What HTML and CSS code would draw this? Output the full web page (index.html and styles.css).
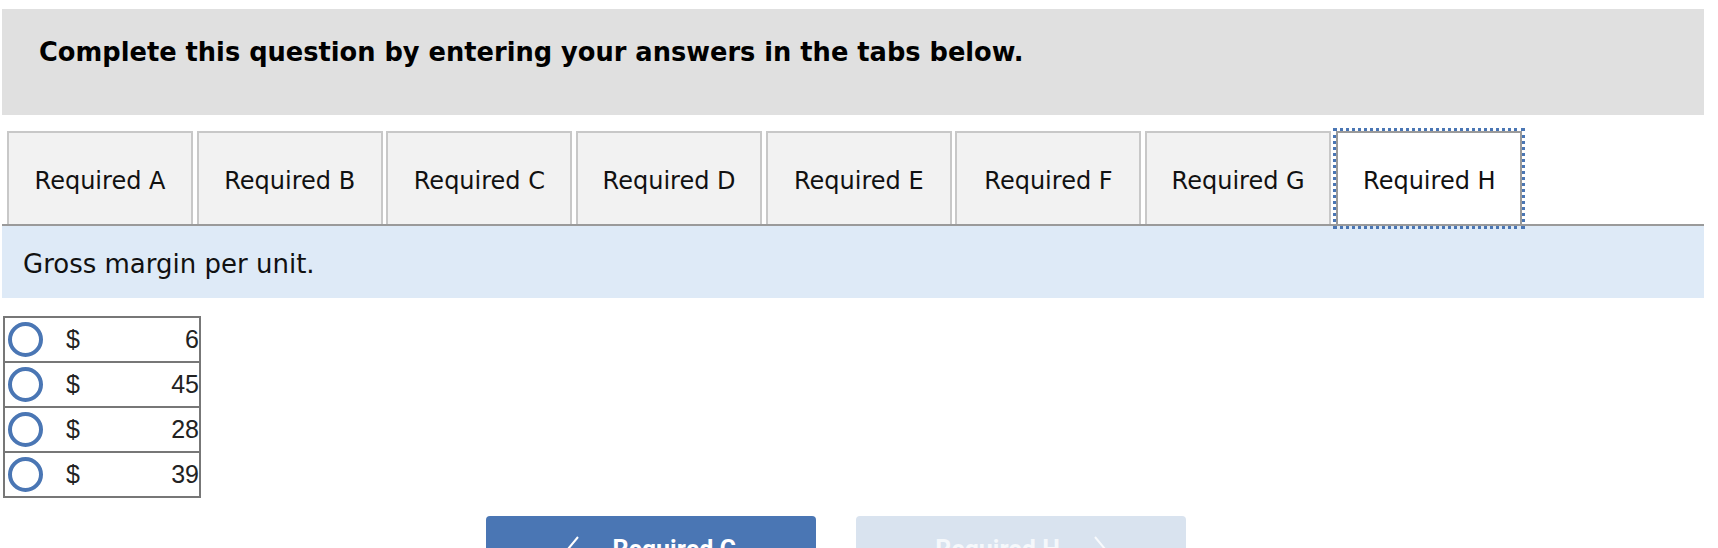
FILE: index.html
```html
<!DOCTYPE html>
<html>
<head>
<meta charset="utf-8">
<link rel="stylesheet" href="styles.css">
</head>
<body>
<div class="wrap">
  <div class="header">
    <h1 class="title">Complete this question by entering your answers in the tabs below.</h1>
  </div>
  <div class="tabs">
    <div class="tab">Required A</div>
    <div class="tab">Required B</div>
    <div class="tab">Required C</div>
    <div class="tab">Required D</div>
    <div class="tab">Required E</div>
    <div class="tab">Required F</div>
    <div class="tab">Required G</div>
    <div class="tab tab-active">Required H</div>
  </div>
  <div class="prompt">Gross margin per unit.</div>
  <div class="choices">
    <div class="choice"><span class="radio"></span><span class="dollar">$</span><span class="num">6</span></div>
    <div class="choice"><span class="radio"></span><span class="dollar">$</span><span class="num">45</span></div>
    <div class="choice"><span class="radio"></span><span class="dollar">$</span><span class="num">28</span></div>
    <div class="choice"><span class="radio"></span><span class="dollar">$</span><span class="num">39</span></div>
  </div>
  <div class="nav">
    <div class="btn btn-prev">
      <svg class="chev" width="14" height="26" viewBox="0 0 14 26"><polyline points="12,1 2,13 12,25" fill="none" stroke="#ffffff" stroke-width="2"/></svg>
      <span>Required G</span>
    </div>
    <div class="btn btn-next">
      <span>Required H</span>
      <svg class="chev" width="14" height="26" viewBox="0 0 14 26"><polyline points="2,1 12,13 2,25" fill="none" stroke="#ffffff" stroke-width="2"/></svg>
    </div>
  </div>
</div>
</body>
</html>
```
FILE: styles.css
```css
html, body {
  margin: 0;
  padding: 0;
  background: #ffffff;
}
body {
  font-family: "DejaVu Sans", Verdana, sans-serif;
  color: #111;
  overflow: hidden;
}
.wrap {
  padding: 9px 14px 0 2px;
  width: 1702px;
}
.header {
  background: #e0e0e0;
  height: 106px;
  box-sizing: border-box;
  padding: 28px 0 0 37px;
}
.title {
  margin: 0;
  font-size: 25.7px;
  line-height: 30px;
  font-weight: bold;
  color: #000;
}
.tabs {
  display: flex;
  gap: 3.7px;
  margin-top: 16px;
  padding-left: 5px;
  border-bottom: 2px solid #9a9a9a;
  height: 95px;
  box-sizing: border-box;
  align-items: flex-end;
}
.tab {
  width: 186px;
  height: 93px;
  box-sizing: border-box;
  background: #f2f2f2;
  border: 2px solid #c8c8c8;
  border-bottom: none;
  display: flex;
  align-items: center;
  justify-content: center;
  padding-top: 5px;
  font-size: 24px;
  line-height: 28px;
  color: #111;
}
.tab-active {
  background: #ffffff;
  border: 2px solid #9a9a9a;
  height: 95px;
  margin-bottom: -2px;
  margin-left: 1.5px;
  outline: 3px dotted #4a76b4;
  outline-offset: 0;
  padding-top: 4px;
}
.prompt {
  background: #deeaf7;
  height: 72px;
  box-sizing: border-box;
  padding: 23px 0 0 21px;
  font-size: 26px;
  line-height: 30px;
  color: #111;
}
.choices {
  margin: 18px 0 0 1px;
  width: 198px;
  border: 2px solid #777777;
  box-sizing: border-box;
  font-family: "Liberation Sans", Arial, sans-serif;
  font-size: 25px;
  color: #222;
}
.choice {
  display: flex;
  align-items: center;
  height: 43px;
}
.choice + .choice {
  border-top: 2px solid #777777;
}
.radio {
  width: 35px;
  height: 35px;
  box-sizing: border-box;
  border: 4px solid #4a76b4;
  border-radius: 50%;
  margin-left: 3px;
  flex: none;
}
.dollar {
  margin-left: 23px;
}
.num {
  flex: 1;
  text-align: right;
}
.nav {
  display: flex;
  gap: 40px;
  margin-top: 18px;
  padding-left: 484px;
}
.btn {
  width: 330px;
  height: 66px;
  border-radius: 4px;
  display: flex;
  align-items: center;
  justify-content: center;
  gap: 33px;
  font-family: Roboto, "Liberation Sans", sans-serif;
  font-weight: bold;
  font-size: 25px;
  color: #ffffff;
}
.btn-prev {
  background: #4a76b4;
}
.btn-next {
  background: #d9e3ef;
  color: rgba(255, 255, 255, 0.75);
}
.btn-next .chev polyline {
  stroke: rgba(255, 255, 255, 0.8);
}
.chev {
  flex: none;
}
```
